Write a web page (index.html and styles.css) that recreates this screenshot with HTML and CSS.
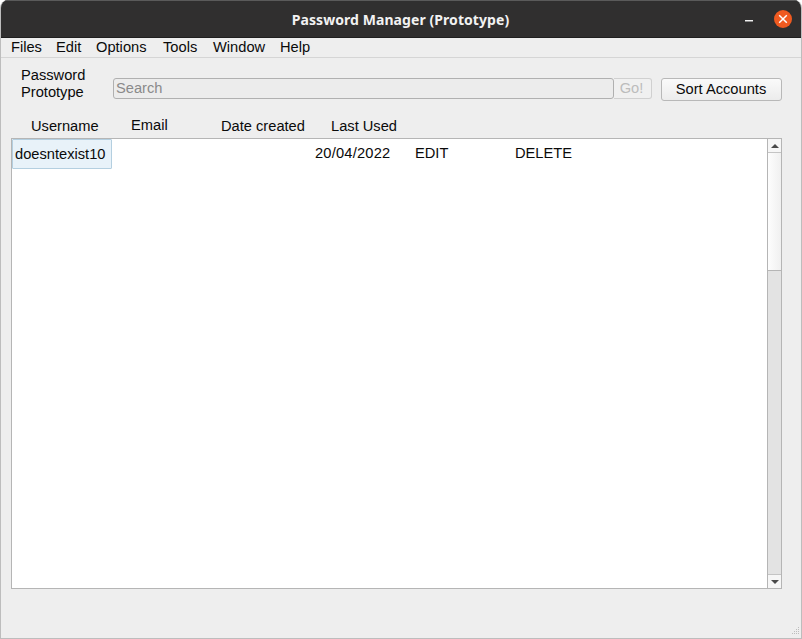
FILE: index.html
```html
<!DOCTYPE html>
<html lang="en">

<head>
  <meta charset="UTF-8">
  <meta name="viewport" content="width=device-width, initial-scale=1.0">
  <title>Password Manager (Prototype)</title>
  <link rel="stylesheet" href="styles.css">
</head>

<body>
  <div class="window">
    <div class="titlebar">
      <span class="title">Password Manager (Prototype)</span>
      <span class="minimize"></span>
      <span class="close">
        <svg width="12" height="12" viewBox="0 0 12 12">
          <path d="M2.2 2.2 L9.8 9.8 M9.8 2.2 L2.2 9.8" stroke="#fff" stroke-width="1.5" fill="none" />
        </svg>
      </span>
    </div>

    <div class="menubar">
      <span>Files</span>
      <span>Edit</span>
      <span>Options</span>
      <span>Tools</span>
      <span>Window</span>
      <span>Help</span>
    </div>

    <div class="toolbar">
      <div class="app-label">Password<br>Prototype</div>
      <div class="search">Search</div>
      <div class="go">Go!</div>
      <div class="sort">Sort Accounts</div>
    </div>

    <div class="headers">
      <span class="col-username">Username</span>
      <span class="col-email">Email</span>
      <span class="col-created">Date created</span>
      <span class="col-used">Last Used</span>
    </div>

    <div class="list">
      <div class="rows">
        <div class="row">
          <div class="cell-username">doesntexist10</div>
          <div class="cell-used">20/04/2022</div>
          <div class="cell-edit">EDIT</div>
          <div class="cell-delete">DELETE</div>
        </div>
      </div>
      <div class="scrollbar">
        <div class="scroll-btn"><span class="arrow-up"></span></div>
        <div class="thumb"></div>
        <div class="trough"></div>
        <div class="scroll-btn scroll-btn-down"><span class="arrow-down"></span></div>
      </div>
    </div>

    <div class="grip">
      <svg width="12" height="12" viewBox="0 0 12 12">
        <path d="M9 1h1v1H9zM7 3h1v1H7zM9 3h1v1H9zM5 5h1v1H5zM7 5h1v1H7zM9 5h1v1H9zM3 7h1v1H3zM5 7h1v1H5zM7 7h1v1H7zM9 7h1v1H9z" fill="#bdbdbd" />
      </svg>
    </div>
  </div>
</body>

</html>
```

FILE: styles.css
```css
* {
  margin: 0;
  padding: 0;
  box-sizing: border-box;
}

body {
  width: 802px;
  height: 639px;
  overflow: hidden;
  background-color: #fff;
  font-family: "Liberation Sans", Arial, sans-serif;
  font-size: 14.67px;
  color: #0a0a0a;
}

.window {
  position: relative;
  display: flex;
  flex-direction: column;
  height: 100%;
  background-color: #eeeeee;
  border: 1px solid #bdbdbd;
  border-top: 0;
  border-radius: 8px 8px 0 0;
  overflow: hidden;
}

.titlebar {
  position: relative;
  display: flex;
  justify-content: center;
  align-items: center;
  height: 38px;
  flex: none;
  background-color: #302f2f;
  border-top: 1px solid #5a5a5a;
  border-bottom: 1px solid #1f1f1f;
}

.title {
  margin-left: -1px;
  font-family: "Noto Sans", sans-serif;
  font-size: 14px;
  font-weight: 700;
  letter-spacing: 0.07px;
  color: #f2f2f2;
}

.minimize {
  position: absolute;
  left: 744px;
  top: 19px;
  width: 8px;
  height: 2px;
  background: linear-gradient(#f0f0f0 50%, #8a8a8a 50%);
}

.close {
  position: absolute;
  left: 773px;
  top: 9px;
  width: 18px;
  height: 18px;
  border-radius: 50%;
  background-color: #ef5a20;
  display: flex;
  justify-content: center;
  align-items: center;
}

.menubar {
  display: grid;
  grid-template-columns: 45px 40px 67px 50px 67px auto;
  flex: none;
  height: 20px;
  padding-left: 10px;
  line-height: 18px;
  border-bottom: 1px solid #d5d5d5;
}

.toolbar {
  display: flex;
  flex: none;
  align-items: flex-start;
  height: 56px;
  padding: 20px 0 0 20px;
}

.app-label {
  width: 92px;
  margin-top: -11px;
  line-height: 17px;
}

.search {
  width: 501px;
  height: 21px;
  padding-left: 2px;
  line-height: 19px;
  color: #8a8a8a;
  background-color: #ececec;
  border: 1px solid #b0b0b0;
  border-radius: 3px;
}

.go {
  width: 38px;
  height: 21px;
  padding-right: 2px;
  text-align: center;
  line-height: 19px;
  color: #bcbcbc;
  background-color: #f0f0f0;
  border: 1px solid #d0d0d0;
  border-left: 0;
  border-radius: 0 3px 3px 0;
}

.sort {
  width: 121px;
  height: 23px;
  margin-left: 9px;
  padding-right: 1px;
  text-align: center;
  line-height: 21px;
  background: linear-gradient(#fafafa, #ececec);
  border: 1px solid #b8b8b8;
  border-radius: 3px;
}

.headers {
  display: flex;
  flex: none;
  height: 24px;
  padding-left: 30px;
  padding-top: 4px;
  line-height: 17px;
}

.col-username {
  width: 100px;
}

.col-email {
  width: 90px;
  margin-top: -1px;
}

.col-created {
  width: 110px;
}

.list {
  display: flex;
  flex: none;
  width: 771px;
  height: 451px;
  margin-left: 10px;
  background-color: #fff;
  border: 1px solid #b5b5b5;
}

.rows {
  flex: 1;
}

.row {
  display: flex;
  align-items: flex-start;
  height: 30px;
  line-height: 29px;
}

.cell-username {
  width: 100px;
  height: 30px;
  padding-left: 2px;
  background-color: #e8f2f9;
  border: 1px solid #b4cfe0;
  border-radius: 1px;
}

.cell-used {
  width: 100px;
  margin-left: 203px;
  letter-spacing: 0.2px;
}

.cell-edit {
  width: 100px;
}

.scrollbar {
  display: flex;
  flex-direction: column;
  width: 14px;
  border-left: 1px solid #b5b5b5;
}

.scroll-btn {
  display: flex;
  justify-content: center;
  align-items: center;
  height: 14px;
  background-color: #f6f6f6;
  border-bottom: 1px solid #c4c4c4;
}

.scroll-btn-down {
  border-top: 1px solid #c4c4c4;
  border-bottom: 0;
}

.arrow-up {
  border: 4px solid transparent;
  border-top: 0;
  border-bottom: 4px solid #4a4a4a;
}

.arrow-down {
  border: 4px solid transparent;
  border-bottom: 0;
  border-top: 4px solid #4a4a4a;
}

.thumb {
  height: 118px;
  background: linear-gradient(90deg, #fdfdfd, #f0f0f0);
  border-bottom: 1px solid #b5b5b5;
}

.trough {
  flex: 1;
  background-color: #e3e3e3;
}

.grip {
  position: absolute;
  right: 0;
  bottom: 0;
  width: 12px;
  height: 12px;
}

.grip svg {
  display: block;
}
```
